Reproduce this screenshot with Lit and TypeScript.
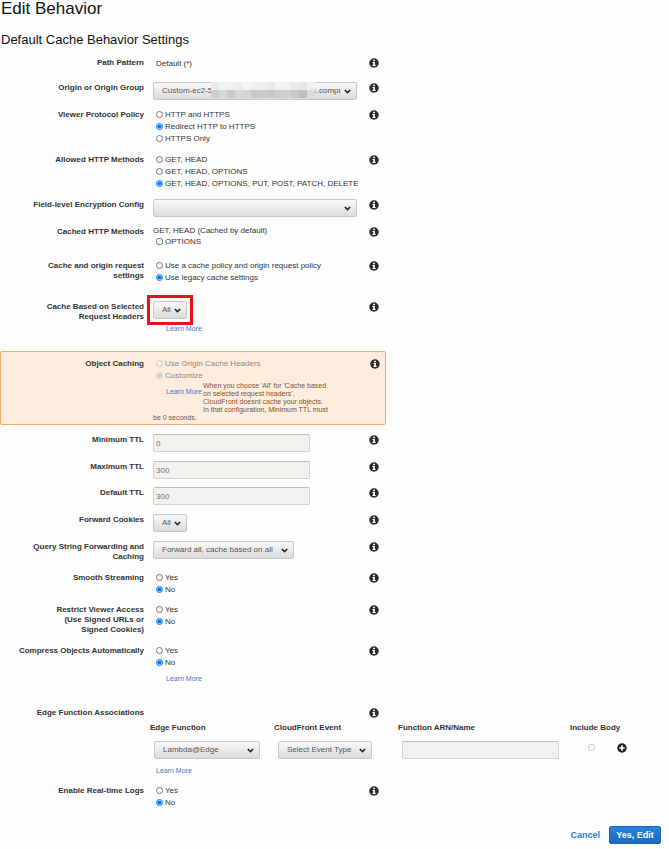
import { LitElement, html, css, svg, nothing } from "lit";
import type { TemplateResult } from "lit";
import { customElement } from "lit/decorators.js";
import { classMap } from "lit/directives/class-map.js";
import { styleMap } from "lit/directives/style-map.js";

const NBSP = "\u00a0";
const originName = `Custom-ec2-5${NBSP.repeat(45)}1.compute`;

// Shades of the mosaic that hides the middle of the origin host name.
const mosaic = [
  "#e9e9e9", "#f1f1f1", "#efefef", "#ececec", "#f3f3f3", "#efefef", "#eeeeee", "#e8e8e8", "#f2f2f2", "#f0f0f0", "#e9e9e9", "#e6e6e6", "#f0f0f0",
  "#cecece", "#d9d9d9", "#c9c9c9", "#d8d8d8", "#d5d5d5", "#c9c9c9", "#cbcbcb", "#c8c8c8", "#cdcdcd", "#d0d0d0", "#c8c8c8", "#bebebe", "#dcdcdc",
];

interface RowOptions {
  id: string;
  label: string | TemplateResult;
  body: TemplateResult | typeof nothing;
  target?: boolean;
  extra?: string;
}

@customElement("app-root")
export class AppRoot extends LitElement {
  static styles = css`
    :host {
      display: block;
      min-height: 100vh;
      background: #fdfdfd;
      color: #333;
      font: 8px/12px "Liberation Sans", Arial, sans-serif;
    }
    h1,
    h2 {
      margin: 0;
      padding-left: 1px;
      font-weight: 400;
      color: #111;
    }
    h1 {
      font-size: 17px;
      line-height: 18px;
    }
    h2 {
      margin-top: 14px;
      margin-bottom: 9px;
      font-size: 13px;
      line-height: 16px;
    }
    .row {
      display: grid;
      grid-template-columns: 144px minmax(0, 1fr) 10px;
      column-gap: 9px;
      align-items: start;
      max-width: 379px;
      margin-bottom: 9px;
    }
    .tight {
      margin-bottom: 8px;
    }
    .h16 {
      min-height: 16px;
    }
    .h25 {
      min-height: 25px;
    }
    .h32 {
      min-height: 32px;
    }
    .h41 {
      min-height: 41px;
    }
    .h53 {
      min-height: 53px;
    }
    .name {
      padding: 1px 0;
      font-weight: 700;
      line-height: 10px;
      text-align: right;
    }
    .info,
    .add {
      display: block;
      width: 10px;
      height: 10px;
      margin: 1px 0 0;
      padding: 0;
      border: 0;
      background: none;
    }
    .info svg,
    .add svg {
      display: block;
      width: 10px;
      height: 10px;
    }
    .choice {
      display: flex;
      align-items: center;
      gap: 2px;
      padding-left: 3px;
      height: 12px;
      white-space: nowrap;
    }
    .choice.off {
      color: #8d8883;
    }
    .choice input,
    .body-check {
      width: 7px;
      height: 7px;
      margin: 0 0 2px;
      flex: none;
    }
    .plain {
      padding: 1px 3px;
    }
    .lead {
      line-height: 10px;
    }
    .select {
      position: relative;
      display: block;
      width: fit-content;
    }
    .select select {
      display: block;
      appearance: none;
      box-sizing: border-box;
      width: 100%;
      height: 18px;
      margin: 0;
      padding: 0 15px 0 8px;
      border: 1px solid #c8c8c8;
      border-radius: 2px;
      background: linear-gradient(#f8f8f8, #dcdcdc);
      color: #555;
      font: inherit;
    }
    .select .chevron {
      position: absolute;
      right: 6px;
      top: 7px;
      width: 7px;
      height: 5px;
      pointer-events: none;
    }
    .select.wide {
      width: 204px;
    }
    .select.short {
      width: 34px;
    }
    .select.query {
      width: 141px;
    }
    .select.fn {
      width: 106px;
    }
    .select.event {
      width: 94px;
    }
    .select.marked {
      outline: 3px solid #e8121d;
      outline-offset: 3px;
    }
    .mosaic {
      position: absolute;
      left: 58px;
      top: 0;
      display: grid;
      grid-template-columns: repeat(13, 8px);
      grid-auto-rows: 8px;
    }
    .text {
      display: block;
      box-sizing: border-box;
      width: 157px;
      height: 18px;
      margin: 0;
      padding: 0 2px;
      border: 1px solid #d2d2d0;
      border-top-color: #bdbdbd;
      border-radius: 2px;
      background: #f2f1ed;
      color: #777;
      font: inherit;
    }
    .more {
      display: block;
      width: 37px;
      margin: 4px 0 0 13px;
      color: #2f7cc9;
      font-size: 7px;
      line-height: 12px;
      text-decoration: none;
    }
    .notice {
      box-sizing: border-box;
      max-width: 386px;
      margin-bottom: 9px;
      padding: 6px 0 2px;
      border: 1px solid #efad66;
      border-radius: 2px;
      background: #feeddd;
    }
    .notice .row {
      margin: 0 0 0 -1px;
      max-width: 380px;
    }
    .hint {
      margin: 0;
      max-width: 182px;
      color: #7d5236;
      font-size: 7px;
      line-height: 8px;
    }
    .hint .more {
      float: left;
      height: 28px;
    }
    table {
      width: 100%;
      max-width: 484px;
      margin: -6px 0 8px 150px;
      border-collapse: collapse;
      table-layout: fixed;
    }
    th {
      padding: 0;
      text-align: left;
      line-height: 12px;
      white-space: nowrap;
    }
    td {
      padding: 7px 0 0 4px;
      vertical-align: top;
    }
    .c-wide {
      width: 124px;
    }
    .c-arn {
      width: 172px;
    }
    .c-body {
      width: 44px;
    }
    td .more {
      margin: 6px 0 0 2px;
    }
    .body-check {
      display: block;
      margin: 3px 0 0 14px;
    }
    .add {
      margin: 2px 0 0 -1px;
    }
    footer {
      display: flex;
      justify-content: flex-end;
      align-items: center;
      gap: 9px;
      padding: 8px 8px 5px 0;
      font-size: 9px;
      font-weight: 700;
    }
    footer a {
      color: #1f7bd6;
      text-decoration: none;
    }
    .submit {
      box-sizing: border-box;
      width: 52px;
      height: 18px;
      padding: 0;
      border: 1px solid #1a63b5;
      border-radius: 2px;
      background: linear-gradient(#2a82dc, #176bc2);
      color: #fff;
      font: inherit;
    }
  `;

  private info() {
    return html`<button class="info" type="button" aria-label="Information">
      ${svg`<svg viewBox="0 0 20 20" aria-hidden="true"><circle cx="10" cy="10" r="9.5" fill="#2b2b2b"/><path fill="#fff" d="M8.2 3.4h3.6v3H8.2zM6.8 8h5v6h1.6v2.2H6.8V14h1.6v-3.8H6.8z"/></svg>`}
    </button>`;
  }

  private row({ id, label, body, target = false, extra = "" }: RowOptions) {
    const cls = { row: true, ...Object.fromEntries(extra.split(" ").filter(Boolean).map((c) => [c, true])) };
    return html`<div class=${classMap(cls)}>
      ${target
        ? html`<label class="name" for=${id}>${label}</label>`
        : html`<div class="name" id=${`${id}-name`}>${label}</div>`}
      <div role=${target ? nothing : "group"} aria-labelledby=${target ? nothing : `${id}-name`}>${body}</div>
      ${this.info()}
    </div>`;
  }

  private radios(name: string, options: string[], chosen: number, off = false) {
    return options.map(
      (text, i) => html`<label class=${classMap({ choice: true, off })}>
        <input type="radio" name=${name} .checked=${i === chosen} ?disabled=${off} />${text}
      </label>`
    );
  }

  private select(id: string, kind: string, text: string, over: unknown = nothing, label?: string) {
    return html`<div class=${`select ${kind}`}>
      <select id=${id} aria-label=${label ?? nothing}><option>${text}</option></select>
      ${over}
      ${svg`<svg class="chevron" viewBox="0 0 7 5" aria-hidden="true"><path d="M.8 1 3.5 3.6 6.2 1" fill="none" stroke="#222" stroke-width="1.6"/></svg>`}
    </div>`;
  }

  private text(id: string, value: string) {
    return html`<input class="text" id=${id} type="text" .value=${value} disabled />`;
  }

  private more() {
    return html`<a class="more" href="#">Learn More</a>`;
  }

  render() {
    const yesNo = ["Yes", "No"];
    const cover = html`<div class="mosaic" aria-hidden="true">
      ${mosaic.map((c) => html`<span style=${styleMap({ background: c })}></span>`)}
    </div>`;

    return html`
      <h1>Edit Behavior</h1>
      <h2>Default Cache Behavior Settings</h2>
      ${this.row({ id: "path", label: "Path Pattern", extra: "h16", body: html`<div class="plain">Default (*)</div>` })}
      ${this.row({ id: "origin", label: "Origin or Origin Group", target: true, body: this.select("origin", "wide", originName, cover) })}
      ${this.row({
        id: "protocol",
        label: "Viewer Protocol Policy",
        body: html`${this.radios("protocol", ["HTTP and HTTPS", "Redirect HTTP to HTTPS", "HTTPS Only"], 1)}`,
      })}
      ${this.row({
        id: "methods",
        label: "Allowed HTTP Methods",
        body: html`${this.radios("methods", ["GET, HEAD", "GET, HEAD, OPTIONS", "GET, HEAD, OPTIONS, PUT, POST, PATCH, DELETE"], 2)}`,
      })}
      ${this.row({ id: "encryption", label: "Field-level Encryption Config", target: true, body: this.select("encryption", "wide", "") })}
      ${this.row({
        id: "cached",
        label: "Cached HTTP Methods",
        extra: "h25",
        body: html`<div class="lead">GET, HEAD (Cached by default)</div>
          <label class="choice"><input type="checkbox" />OPTIONS</label>`,
      })}
      ${this.row({
        id: "policy",
        label: html`Cache and origin request<br />settings`,
        extra: "h32",
        body: html`${this.radios("policy", ["Use a cache policy and origin request policy", "Use legacy cache settings"], 1)}`,
      })}
      ${this.row({
        id: "headers",
        label: html`Cache Based on Selected<br />Request Headers`,
        target: true,
        extra: "h41",
        body: html`${this.select("headers", "short marked", "All")}${this.more()}`,
      })}
      <section class="notice">
        ${this.row({
          id: "caching",
          label: "Object Caching",
          body: html`${this.radios("caching", ["Use Origin Cache Headers", "Customize"], 1, true)}
            <p class="hint">
              ${this.more()}When you choose 'All' for 'Cache based<br />on selected request headers',<br />CloudFront doesnt
              cache your objects.<br />In that configuration, Minimum TTL must<br />be 0 seconds.
            </p>`,
        })}
      </section>
      ${this.row({ id: "min", label: "Minimum TTL", target: true, body: this.text("min", "0") })}
      ${this.row({ id: "max", label: "Maximum TTL", target: true, extra: "tight", body: this.text("max", "300") })}
      ${this.row({ id: "default", label: "Default TTL", target: true, body: this.text("default", "300") })}
      ${this.row({ id: "cookies", label: "Forward Cookies", target: true, body: this.select("cookies", "short", "All") })}
      ${this.row({
        id: "query",
        label: html`Query String Forwarding and<br />Caching`,
        target: true,
        body: this.select("query", "query", "Forward all, cache based on all"),
      })}
      ${this.row({ id: "smooth", label: "Smooth Streaming", extra: "tight", body: html`${this.radios("smooth", yesNo, 1)}` })}
      ${this.row({
        id: "restrict",
        label: html`Restrict Viewer Access<br />(Use Signed URLs or<br />Signed Cookies)`,
        body: html`${this.radios("restrict", yesNo, 1)}`,
      })}
      ${this.row({
        id: "compress",
        label: "Compress Objects Automatically",
        extra: "h53",
        body: html`${this.radios("compress", yesNo, 1)}${this.more()}`,
      })}
      ${this.row({ id: "edge", label: "Edge Function Associations", body: nothing })}
      <table aria-labelledby="edge-name">
        <colgroup>
          <col class="c-wide" /><col class="c-wide" /><col class="c-arn" /><col class="c-body" /><col />
        </colgroup>
        <thead>
          <tr>
            <th>Edge Function</th>
            <th>CloudFront Event</th>
            <th>Function ARN/Name</th>
            <th colspan="2">Include Body</th>
          </tr>
        </thead>
        <tbody>
          <tr>
            <td>${this.select("fn", "fn", "Lambda@Edge", nothing, "Edge Function")}${this.more()}</td>
            <td>${this.select("event", "event", "Select Event Type", nothing, "CloudFront Event")}</td>
            <td><input class="text" type="text" aria-label="Function ARN/Name" disabled /></td>
            <td><input class="body-check" type="checkbox" aria-label="Include Body" disabled /></td>
            <td>
              <button class="add" type="button" aria-label="Add">
                ${svg`<svg viewBox="0 0 20 20" aria-hidden="true"><circle cx="10" cy="10" r="9.5" fill="#222"/><path fill="#fff" d="M8.4 4.5h3.2v3.9h3.9v3.2h-3.9v3.9H8.4v-3.9H4.5V8.4h3.9z"/></svg>`}
              </button>
            </td>
          </tr>
        </tbody>
      </table>
      ${this.row({ id: "logs", label: "Enable Real-time Logs", body: html`${this.radios("logs", yesNo, 1)}` })}
      <footer>
        <a href="#">Cancel</a>
        <button class="submit" type="button">Yes, Edit</button>
      </footer>
    `;
  }
}
